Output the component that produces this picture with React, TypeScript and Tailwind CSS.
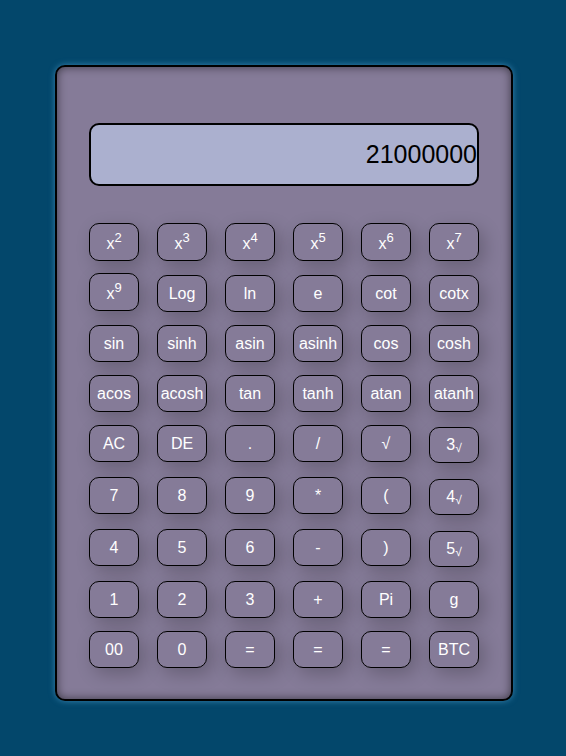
import React from "react";

type Key = { label: React.ReactNode; kind?: "sup" | "root" };

const sup = (n: string): Key => ({
  label: (
    <>
      x<sup className="text-[13px] top-[-7px]">{n}</sup>
    </>
  ),
  kind: "sup",
});

const root = (n: string): Key => ({
  label: (
    <>
      {n}
      <span className="text-[12px] relative top-[2px]">√</span>
    </>
  ),
  kind: "root",
});

const k = (s: string): Key => ({ label: s });

const rows: { keys: Key[]; h: string }[] = [
  { keys: ["2", "3", "4", "5", "6", "7"].map(sup), h: "h-[50px]" },
  { keys: [sup("9"), k("Log"), k("ln"), k("e"), k("cot"), k("cotx")], h: "h-[52px]" },
  { keys: ["sin", "sinh", "asin", "asinh", "cos", "cosh"].map(k), h: "h-[50px]" },
  { keys: ["acos", "acosh", "tan", "tanh", "atan", "atanh"].map(k), h: "h-[50px]" },
  { keys: [k("AC"), k("DE"), k("."), k("/"), k("√"), root("3")], h: "h-[52px]" },
  { keys: [k("7"), k("8"), k("9"), k("*"), k("("), root("4")], h: "h-[52px]" },
  { keys: [k("4"), k("5"), k("6"), k("-"), k(")"), root("5")], h: "h-[52px]" },
  { keys: ["1", "2", "3", "+", "Pi", "g"].map(k), h: "h-[50px]" },
  { keys: ["00", "0", "=", "=", "=", "BTC"].map(k), h: "h-[50px]" },
];

function CalcKey({ item, rowHasSup }: { item: Key; rowHasSup: boolean }) {
  let cls = "h-[37px]";
  if (item.kind === "sup") cls = "h-[38px] pt-[3px]";
  else if (item.kind === "root") cls = "h-[36px] mt-[2px]";
  else if (rowHasSup) cls = "h-[37px] mt-[2px]";
  return (
    <button
      className={`${cls} w-[50px] shrink-0 rounded-[10px] border border-black bg-[#857b98] text-[16px] leading-none text-white shadow-[5px_6px_18px_rgba(0,0,0,0.22)] flex items-center justify-center`}
    >
      <span>{item.label}</span>
    </button>
  );
}

export default function App() {
  return (
    <div
      className="min-h-screen w-full bg-[#03476b] pt-[65px] pl-[55px]"
      style={{ fontFamily: '"Liberation Sans", Arial, sans-serif' }}
    >
      <div className="w-[458px] h-[636px] rounded-[10px] border-2 border-black bg-[#857b98] shadow-[inset_0_0_10px_rgba(0,0,0,0.55),0_0_6px_rgba(90,170,220,0.6)] pl-[32px] pt-[56px]">
        <div className="w-[390px] h-[63px] rounded-[10px] border-2 border-black bg-[#abb0cf] flex items-center justify-end text-[25px] text-black">
          21000000
        </div>
        <div className="mt-[37px] flex flex-col">
          {rows.map((row, i) => {
            const hasSup = row.keys.some((x) => x.kind === "sup");
            return (
              <div key={i} className={`${row.h} flex items-start gap-[18px]`}>
                {row.keys.map((item, j) => (
                  <CalcKey key={j} item={item} rowHasSup={hasSup} />
                ))}
              </div>
            );
          })}
        </div>
      </div>
    </div>
  );
}
